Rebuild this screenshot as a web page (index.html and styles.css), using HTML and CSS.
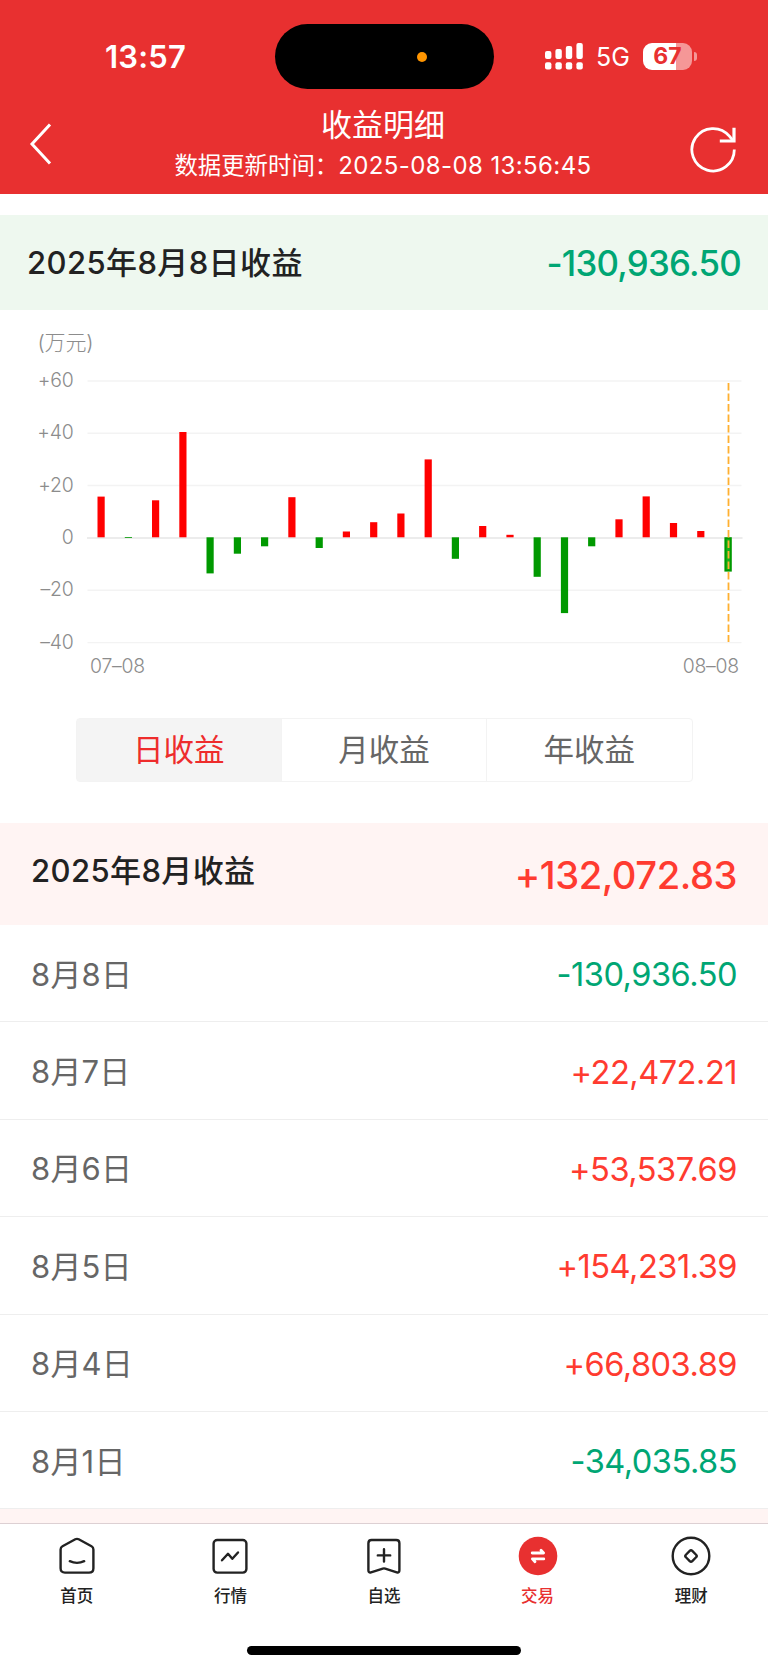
FILE: index.html
```html
<!DOCTYPE html>
<html lang="zh-CN">
<head>
    <meta charset="UTF-8">
    <meta name="viewport" content="width=device-width, initial-scale=1.0">
    <title>收益明细</title>
    <link rel="stylesheet" href="styles.css">
</head>
<body>
    <div class="header">
        <!--状态栏-->
        <div class="status">
            <span class="time">13:57</span>
            <div class="island"><i></i></div>
            <div class="signal">
                <svg width="39" height="27" viewBox="0 0 39 27" fill="#fff">
                    <rect x="0" y="8" width="6.4" height="8" rx="2"/>
                    <rect x="10.4" y="6" width="6.4" height="10" rx="2"/>
                    <rect x="20.8" y="3" width="6.4" height="13" rx="2"/>
                    <rect x="31.4" y="0" width="6.4" height="16" rx="2"/>
                    <rect x="0" y="19.3" width="6.4" height="7.2" rx="2"/>
                    <rect x="10.4" y="19.3" width="6.4" height="7.2" rx="2"/>
                    <rect x="20.8" y="19.3" width="6.4" height="7.2" rx="2"/>
                    <rect x="31.4" y="19.3" width="6.4" height="7.2" rx="2"/>
                </svg>
                <span class="net">5G</span>
                <div class="battery">67</div>
                <b class="nub"></b>
            </div>
        </div>
        <!--标题栏-->
        <div class="nav">
            <svg class="back" width="24" height="44" viewBox="0 0 24 44">
                <path d="M21 2.5L3 22L21 41.5" fill="none" stroke="#fff" stroke-width="3"/>
            </svg>
            <div class="title">
                <h1>收益明细</h1>
                <p>数据更新时间：<span>2025-08-08 13:56:45</span></p>
            </div>
            <svg class="refresh" width="48" height="48" viewBox="0 0 48 48">
                <path d="M45.3 24.6A21.2 21.2 0 1 1 40.4 11.2L44 15.6" fill="none" stroke="#fff" stroke-width="2.8"/>
                <path d="M45 2.8V16H30.8" fill="none" stroke="#fff" stroke-width="3.2"/>
            </svg>
        </div>
    </div>

    <div class="day">
        <h2>2025年8月8日收益</h2>
        <span class="down">-130,936.50</span>
    </div>

    <!--收益柱状图-->
    <svg class="chart" width="768" height="408" viewBox="0 310 768 408">
        <g class="grid">
            <path d="M87.5 381H741.5M87.5 433.3H741.5M87.5 485.5H741.5M87.5 590.3H741.5M87.5 642.6H741.5"/>
            <path class="zero" d="M87 538H742.5"/>
        </g>
        <g class="label">
            <text class="unit" x="37.5" y="350">(万元)</text>
            <text x="73.5" y="387" text-anchor="end">+60</text>
            <text x="73.5" y="439.3" text-anchor="end">+40</text>
            <text x="73.5" y="491.6" text-anchor="end">+20</text>
            <text x="73.5" y="543.9" text-anchor="end">0</text>
            <text x="73.5" y="596.3" text-anchor="end">–20</text>
            <text x="73.5" y="648.6" text-anchor="end">–40</text>
            <text x="90" y="672.5">07–08</text>
            <text x="739" y="672.5" text-anchor="end">08–08</text>
        </g>
        <g fill="#f00">
            <rect x="97.5" y="496.6" width="7.2" height="40.7"/>
            <rect x="152" y="500.3" width="7.2" height="37"/>
            <rect x="179.3" y="432" width="7.2" height="105.3"/>
            <rect x="288.3" y="497.2" width="7.2" height="40.1"/>
            <rect x="342.8" y="531.5" width="7.2" height="5.8"/>
            <rect x="370.1" y="522.2" width="7.2" height="15.1"/>
            <rect x="397.3" y="513.5" width="7.2" height="23.8"/>
            <rect x="424.6" y="459.4" width="7.2" height="77.9"/>
            <rect x="479.1" y="526" width="7.2" height="11.3"/>
            <rect x="506.4" y="534.8" width="7.2" height="2.5"/>
            <rect x="615.4" y="519.3" width="7.2" height="18"/>
            <rect x="642.6" y="496.4" width="7.2" height="40.9"/>
            <rect x="669.9" y="523" width="7.2" height="14.3"/>
            <rect x="697.2" y="531" width="7.2" height="6.3"/>
        </g>
        <g fill="#090">
            <rect x="124.8" y="537" width="7.2" height="0.8"/>
            <rect x="206.5" y="537.3" width="7.2" height="36.1"/>
            <rect x="233.8" y="537.3" width="7.2" height="16.4"/>
            <rect x="261" y="537.3" width="7.2" height="9"/>
            <rect x="315.6" y="537.3" width="7.2" height="10.7"/>
            <rect x="451.8" y="537.3" width="7.2" height="21.5"/>
            <rect x="533.6" y="537.3" width="7.2" height="39.5"/>
            <rect x="560.9" y="537.3" width="7.2" height="75.8"/>
            <rect x="588.1" y="537.3" width="7.2" height="9"/>
        </g>
        <rect x="725.4" y="538.2" width="5.4" height="32.4" fill="#19b219" stroke="#090" stroke-width="2"/>
        <path class="cursor" d="M728.5 383V642"/>
    </svg>

    <div class="tabs">
        <a class="current">日收益</a>
        <a>月收益</a>
        <a>年收益</a>
    </div>

    <div class="month">
        <h2>2025年8月收益</h2>
        <span class="up">+132,072.83</span>
    </div>
    <ul class="list">
        <li><span>8月8日</span><em class="down">-130,936.50</em></li>
        <li><span>8月7日</span><em class="up">+22,472.21</em></li>
        <li><span>8月6日</span><em class="up">+53,537.69</em></li>
        <li><span>8月5日</span><em class="up">+154,231.39</em></li>
        <li><span>8月4日</span><em class="up">+66,803.89</em></li>
        <li><span>8月1日</span><em class="down">-34,035.85</em></li>
    </ul>
    <div class="next"></div>

    <!--底部导航-->
    <div class="footer">
        <ul>
            <li>
                <svg width="40" height="40" viewBox="0 0 40 40">
                    <path d="M3.6 13.5Q3.6 11.3 5.5 10.3L18.3 3.3Q20 2.4 21.7 3.3L34.5 10.3Q36.4 11.3 36.4 13.5V32.2Q36.4 36.6 32 36.6H8Q3.6 36.6 3.6 32.2Z"/>
                    <path d="M12.8 25.2Q20 28.6 27.2 25.2"/>
                </svg>
                <span>首页</span>
            </li>
            <li>
                <svg width="40" height="40" viewBox="0 0 40 40">
                    <rect x="3.6" y="4" width="32.8" height="32.6" rx="3.6"/>
                    <path d="M12 24.3L18 17.8L22.3 22.8L28 16.5"/>
                </svg>
                <span>行情</span>
            </li>
            <li>
                <svg width="40" height="40" viewBox="0 0 40 40">
                    <path d="M7.6 4H32.2Q35.4 4 35.4 7.2V34.2Q35.4 37 32.8 36.3L21.2 32.6Q20 32.2 18.8 32.6L7 36.3Q4.4 37 4.4 34.2V7.2Q4.4 4 7.6 4Z"/>
                    <path d="M20 13.2V25.6M13.8 19.4H26.2"/>
                </svg>
                <span>自选</span>
            </li>
            <li class="current">
                <svg width="40" height="40" viewBox="0 0 40 40">
                    <circle class="disc" cx="20" cy="20" r="19.3"/>
                    <path class="arrow" d="M14.2 17H25.6L23 14.2M25.8 22.9H14.4L17 25.8"/>
                </svg>
                <span>交易</span>
            </li>
            <li>
                <svg width="40" height="40" viewBox="0 0 40 40">
                    <circle cx="20" cy="20" r="18.3"/>
                    <rect x="15.5" y="15.5" width="9" height="9" rx="1.8" transform="rotate(45 20 20)"/>
                </svg>
                <span>理财</span>
            </li>
        </ul>
        <div class="bar"></div>
    </div>
</body>
</html>
```
FILE: styles.css
```css
* {
  padding: 0;
  margin: 0;
  list-style: none;
  box-sizing: border-box;
}

body {
  width: 768px;
  height: 1669px;
  overflow: hidden;
  background: #fff;
  color: #222;
  font-family: Inter, "Noto Sans CJK SC", sans-serif;
}

h1,
h2,
em {
  font-weight: normal;
  font-style: normal;
}

.header {
  height: 215px;
  background: #e83030;
  border-bottom: 21px solid #fff;
  color: #fff;
}

/* 状态栏 */
.status {
  display: flex;
  align-items: center;
  height: 113px;
  padding-left: 105px;
}

.time {
  width: 169.5px;
  font-size: 31px;
  font-weight: 600;
  letter-spacing: 0.2px;
}

.island {
  display: flex;
  align-items: center;
  width: 219px;
  height: 65px;
  padding-left: 142px;
  border-radius: 33px;
  background: #000;
}

.island i {
  width: 10px;
  height: 10px;
  border-radius: 5px;
  background: #ff9500;
}

.signal {
  display: flex;
  align-items: center;
  margin-left: 51.5px;
}

.net {
  width: 47px;
  margin-left: 12px;
  font-size: 25px;
  line-height: 28px;
}

.battery {
  width: 49px;
  height: 27px;
  border-radius: 9px;
  background: linear-gradient(to right, #fff 33px, #f59797 33px);
  color: #e83030;
  font-size: 23px;
  font-weight: 700;
  line-height: 27px;
  text-align: center;
}

.nub {
  width: 3px;
  height: 9px;
  margin-left: 2px;
  border-radius: 0 4px 4px 0;
  background: #f59797;
}

/* 标题栏 */
.nav {
  display: flex;
  justify-content: space-between;
  height: 81px;
  padding: 0 31px 0 29px;
}

.back {
  margin-top: 9px;
  margin-right: 24px;
}

.title {
  text-align: center;
}

.title h1 {
  margin-top: -10px;
  font-size: 31px;
  line-height: 44px;
}

.title p {
  font-size: 23.4px;
  line-height: 38px;
}

.title p span {
  font-size: 24px;
  letter-spacing: 0.4px;
}

.refresh {
  margin-top: 12px;
}

.up {
  color: #ff3b30;
}

.down {
  color: #00a674;
}

.day {
  display: flex;
  justify-content: space-between;
  align-items: center;
  height: 95px;
  padding: 0 27px;
  background: #eef8ef;
}

h2 {
  font-size: 31px;
  font-weight: 500;
  letter-spacing: 0.4px;
}

.day h2 {
  padding-bottom: 4px;
}

.day span {
  font-size: 34.8px;
  font-weight: 500;
  letter-spacing: -0.75px;
}

/* 柱状图 */
.chart {
  display: block;
}

.grid path {
  stroke: #f3f3f3;
  stroke-width: 1.4;
}

.grid .zero {
  stroke: #ececec;
  stroke-width: 2;
}

.label {
  fill: #8c8c8c;
  font-size: 19.4px;
  font-weight: 300;
  letter-spacing: -0.2px;
}

.label .unit {
  font-size: 21px;
}

.cursor {
  stroke: #ffb030;
  stroke-width: 1.8;
  stroke-dasharray: 7.4 3.1;
}

.tabs {
  display: flex;
  width: 617px;
  height: 64px;
  margin: 0 auto 41px;
  border: 1px solid #f3f3f3;
  border-radius: 4px;
}

.tabs a {
  flex: 1;
  color: #666;
  font-size: 30.5px;
  line-height: 61px;
  text-align: center;
}

.tabs a + a {
  border-left: 1px solid #f3f3f3;
}

.tabs .current {
  background: #f4f4f4;
  color: #ee2c2c;
}

/* 月收益 */
.month {
  display: flex;
  justify-content: space-between;
  height: 102px;
  padding: 0 31px;
  background: #fff4f3;
  line-height: 95px;
}

.month span {
  font-size: 38.2px;
  font-weight: 500;
  line-height: 104px;
  letter-spacing: -0.45px;
}

.list li {
  display: flex;
  justify-content: space-between;
  align-items: center;
  height: 97.4px;
  padding: 0 31px;
  border-bottom: 1px solid #eee;
  color: #666;
  font-size: 31px;
}

.list span {
  padding-bottom: 2px;
  letter-spacing: 0.2px;
}

.list em {
  padding-top: 2px;
  font-size: 32.6px;
  letter-spacing: -0.5px;
}

.next {
  height: 13.6px;
  background: #fff4f3;
}

/* 底部导航 */
.footer {
  height: 146px;
  border-top: 1px solid #ddd0d3;
  background: #fff;
}

.footer ul {
  display: flex;
  height: 122px;
  padding-top: 12px;
}

.footer li {
  width: 153.6px;
  font-size: 16.5px;
  font-weight: 500;
  line-height: 41px;
  text-align: center;
}

.footer svg {
  display: block;
  margin: 0 auto;
  fill: none;
  stroke: #222;
  stroke-width: 2.4;
  stroke-linecap: round;
  stroke-linejoin: round;
}

.footer .current {
  color: #e83030;
}

.footer .disc {
  fill: #e83030;
  stroke: none;
}

.footer .arrow {
  stroke: #fff;
  stroke-width: 2.8;
}

.bar {
  width: 274px;
  height: 9px;
  margin: 0 auto;
  border-radius: 5px;
  background: #000;
}
```
